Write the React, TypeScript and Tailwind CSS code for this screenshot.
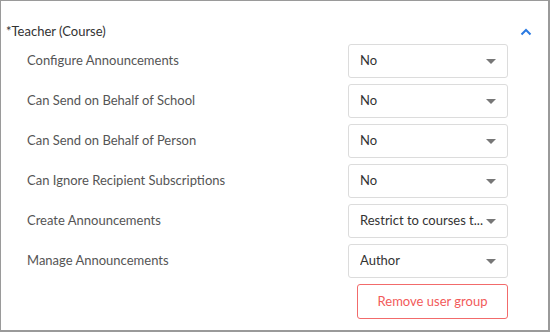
import React from "react";

const rows: [string, string][] = [
  ["Configure Announcements", "No"],
  ["Can Send on Behalf of School", "No"],
  ["Can Send on Behalf of Person", "No"],
  ["Can Ignore Recipient Subscriptions", "No"],
  ["Create Announcements", "Restrict to courses t..."],
  ["Manage Announcements", "Author"],
];

export default function App() {
  return (
    <div
      className="w-[551px] h-[333px] bg-white"
      style={{ fontFamily: "Lato, 'Open Sans', sans-serif" }}
    >
      <div className="w-[550px] h-[332px] border border-[#9a9a9a] border-r-2 border-b-2 pt-[21px]">
        <div className="flex items-center justify-between pl-[5px] pr-[16px] h-[18px]">
          <span className="text-[13px] text-[#333] leading-none">*Teacher (Course)</span>
          <svg width="12" height="8" viewBox="0 0 12 8" className="mt-[1px]">
            <path d="M1.5 6.5 L6 2 L10.5 6.5" fill="none" stroke="#2a7ae2" strokeWidth="2" />
          </svg>
        </div>
        <div className="flex flex-col gap-[6px] mt-[4px]">
          {rows.map(([label, value]) => (
            <div key={label} className="flex items-center pl-[26px] pr-[40px]">
              <span className="flex-1 text-[13px] text-[#555]">{label}</span>
              <div className="w-[160px] h-[34px] border border-[#dcdcdc] rounded-[3px] flex items-center pl-[11px] pr-[11px]">
                <span className="flex-1 text-[13px] text-[#333] whitespace-nowrap overflow-hidden">{value}</span>
                <svg width="10" height="5" viewBox="0 0 10 5">
                  <path d="M0 0 L10 0 L5 5 Z" fill="#777" />
                </svg>
              </div>
            </div>
          ))}
          <div className="flex justify-end pr-[40px]">
            <button className="w-[151px] h-[35px] border border-[#f26b6b] rounded-[3px] text-[13px] text-[#f25a5a] bg-white">
              Remove user group
            </button>
          </div>
        </div>
      </div>
    </div>
  );
}
